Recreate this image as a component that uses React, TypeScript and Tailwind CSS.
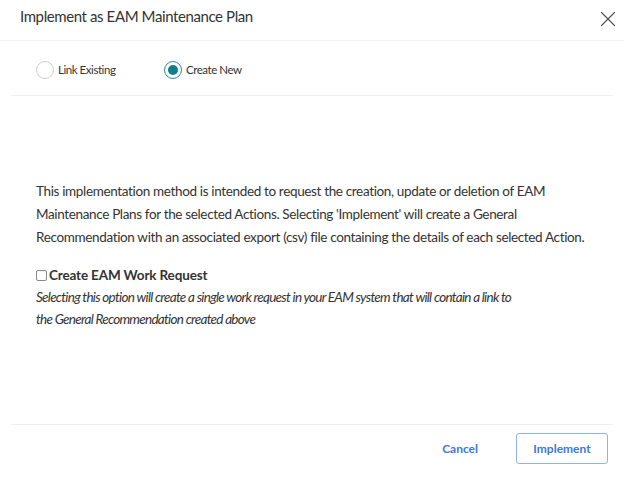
import { X } from "lucide-react";

export default function App() {
  return (
    <div className="flex h-[482px] w-[624px] flex-col bg-white text-[#333] [font-family:Lato,'Liberation_Sans',sans-serif]">
      <header className="flex h-[41px] items-start justify-between border-b border-[#f2f2f2] pl-5 pr-[3px]">
        <h1 className="pt-[6px] text-[15px] leading-[20px] tracking-[-0.4px] text-[#333]">Implement as EAM Maintenance Plan</h1>
        <button className="mt-[6px] flex h-[26px] w-[26px] items-center justify-center text-[#555]">
          <X size={26} strokeWidth={1.1} />
        </button>
      </header>

      <div className="mx-[11px] flex h-[55px] items-center gap-[19px] border-b border-[#f0f0f0] pl-[25px] pt-[3px]">
        <label className="flex w-[109px] items-center gap-[4px] text-[11.5px] tracking-[-0.45px]">
          <span className="h-[18px] w-[18px] rounded-full border border-[#cfcfcf] bg-white" />
          Link Existing
        </label>
        <label className="flex items-center gap-[4px] text-[11.5px] tracking-[-0.45px]">
          <span className="flex h-[18px] w-[18px] items-center justify-center rounded-full border border-[#2d8a9a] bg-white">
            <span className="h-[10px] w-[10px] rounded-full bg-[#137b8f]" />
          </span>
          Create New
        </label>
      </div>

      <main className="flex-1 whitespace-nowrap px-9 pt-[84px] text-[13.5px] leading-[23px] tracking-[-0.35px]">
        <p>
          This implementation method is intended to request the creation, update or deletion of EAM
          <br />
          Maintenance Plans for the selected Actions. Selecting 'Implement' will create a General
          <br />
          Recommendation with an associated export (csv) file containing the details of each selected Action.
        </p>
        <label className="mt-[15px] flex items-center gap-[2px] font-bold leading-[22px] tracking-[-0.15px]">
          <span className="h-[11px] w-[11px] rounded-[2px] border border-[#8a8a8a] bg-white" />
          Create EAM Work Request
        </label>
        <p className="leading-[22px] italic tracking-[-0.72px]">
          Selecting this option will create a single work request in your EAM system that will contain a link to
          <br />
          the General Recommendation created above
        </p>
      </main>

      <footer className="mx-[11px] flex h-[58px] items-start justify-end gap-[38px] border-t border-[#efefef] pr-[5px] pt-[8px]">
        <button className="h-[31px] text-[12px] font-bold text-[#3d78dc]">Cancel</button>
        <button className="h-[31px] w-[92px] rounded-[3px] border border-[#8fb3f0] text-[12px] font-bold text-[#3d78dc]">
          Implement
        </button>
      </footer>
    </div>
  );
}
